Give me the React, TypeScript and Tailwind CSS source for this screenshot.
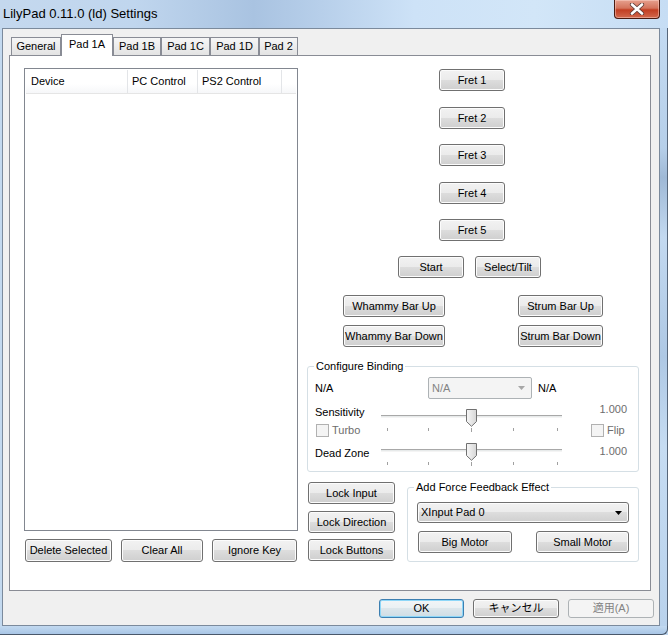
import React from "react";

const BTN =
  "flex items-center justify-center rounded-[3px] border text-[11px] leading-none whitespace-nowrap";
const NORMAL =
  "border-[#707070] bg-[linear-gradient(#f2f2f2_0%,#ebebeb_50%,#dddddd_50%,#cfcfcf_100%)] shadow-[inset_0_0_0_1px_#fcfcfc] text-black";

function Btn({ label, cls }: { label: string; cls: string }) {
  return <div className={`${BTN} ${NORMAL} ${cls}`}>{label}</div>;
}

function Thumb() {
  return (
    <svg width="11" height="18" viewBox="0 0 11 18" className="block">
      <defs>
        <linearGradient id="tg" x1="0" y1="0" x2="1" y2="0">
          <stop offset="0" stopColor="#f7f7f7" />
          <stop offset="1" stopColor="#d6d6d6" />
        </linearGradient>
      </defs>
      <path d="M0.5 0.5 H10.5 V12.5 L5.5 17.3 L0.5 12.5 Z" fill="url(#tg)" stroke="#707070" strokeWidth="1" />
    </svg>
  );
}

function Slider() {
  return (
    <div className="relative w-[181px] h-[24px]">
      <div className="absolute left-0 right-0 top-[6px] h-[3px] border-t border-t-[#a8a8a8] bg-[#e7eaea] border-b border-b-[#f4f4f4]" />
      <div className="absolute left-[85px] top-0">
        <Thumb />
      </div>
      <div className="absolute left-[6px] top-[19px] w-px h-[3px] bg-[#a0a0a0]" />
      <div className="absolute left-[47px] top-[19px] w-px h-[3px] bg-[#a0a0a0]" />
      <div className="absolute left-[90px] top-[19px] w-px h-[4px] bg-[#a0a0a0]" />
      <div className="absolute left-[132px] top-[19px] w-px h-[3px] bg-[#a0a0a0]" />
      <div className="absolute left-[176px] top-[19px] w-px h-[3px] bg-[#a0a0a0]" />
    </div>
  );
}

function Check({ label }: { label: string }) {
  return (
    <div className="flex items-center h-[13px]">
      <div className="w-[13px] h-[13px] border border-[#b1b1b1] bg-[#f4f4f4]" />
      <span className="ml-[3px] text-[11px] leading-[13px] text-[#6d6d6d]">{label}</span>
    </div>
  );
}

function Tab({ label, cls, selected }: { label: string; cls: string; selected?: boolean }) {
  if (selected)
    return (
      <div
        className={`flex items-center justify-center h-[22px] border-l border-t border-r border-[#898c95] bg-white text-[11px] leading-none text-black pb-[2px] ${cls}`}
      >
        {label}
      </div>
    );
  return (
    <div
      className={`flex items-center justify-center h-[19px] border border-[#898c95] bg-[linear-gradient(#f6f6f6,#e3e3e3)] text-[11px] leading-none text-black ${cls}`}
    >
      {label}
    </div>
  );
}

export default function App() {
  return (
    <div className="w-[668px] h-[635px] flex flex-col overflow-hidden font-['Liberation_Sans','Noto_Sans_CJK_JP',sans-serif] bg-[#bed6ee]">
      {/* Title bar */}
      <div className="relative h-[28px] flex items-center pl-[3px] pb-[1px] bg-[linear-gradient(90deg,#c4d8ee_0%,#c0d6ee_20%,#a9c3e1_38%,#b7cfea_48%,#cde2f7_62%,#d2e6f8_80%,#c6ddf4_100%)]">
        <span className="text-[13px] leading-none text-black">LilyPad 0.11.0 (ld) Settings</span>
        <div className="absolute right-[8px] top-0 w-[46px] h-[19px] rounded-b-[4px] border border-t-0 border-[#4a1a10] bg-[linear-gradient(#e6a08e_0%,#d4745c_45%,#c23e22_55%,#d2694e_100%)] shadow-[inset_0_0_0_1px_rgba(255,220,210,0.45)] flex items-center justify-center">
          <svg width="16" height="12" viewBox="0 0 16 12">
            <path d="M3 1.5 L13 10.5 M13 1.5 L3 10.5" stroke="#5a3a36" strokeWidth="4.2" strokeLinecap="round" />
            <path d="M3 1.5 L13 10.5 M13 1.5 L3 10.5" stroke="#ffffff" strokeWidth="2.6" strokeLinecap="round" />
          </svg>
        </div>
      </div>

      {/* Middle */}
      <div className="flex h-[598px]">
        <div className="w-[2px] bg-[#c3d9ef]" />
        <div className="w-[658px] border border-[#7b8a9c] bg-[#f0f0f0] flex flex-col">
          {/* Tabs */}
          <div className="relative z-10 flex items-end h-[22px] mt-[5px] ml-[8px]">
            <Tab label="General" cls="w-[50px]" />
            <Tab label="Pad 1A" cls="w-[52px]" selected />
            <Tab label="Pad 1B" cls="w-[48px]" />
            <Tab label="Pad 1C" cls="w-[49px]" />
            <Tab label="Pad 1D" cls="w-[49px]" />
            <Tab label="Pad 2" cls="w-[39px]" />
          </div>
          {/* Panel */}
          <div className="-mt-[1px] ml-[6px] w-[642px] h-[536px] border border-[#898c95] bg-white flex pl-[14px] pt-[12px] text-[11px] text-black">
            {/* Left column */}
            <div className="w-[274px] flex flex-col">
              <div className="h-[463px] border border-[#828790] bg-white pt-[1px] px-[1px]">
                <div className="flex h-[24px] border-b border-[#e5e5e5] bg-[linear-gradient(#ffffff_0%,#ffffff_60%,#f6f7f9_100%)] leading-none">
                  <div className="w-[102px] border-r border-[#e3e5e8] flex items-center pl-[5px]">Device</div>
                  <div className="w-[70px] border-r border-[#e3e5e8] flex items-center pl-[4px]">PC Control</div>
                  <div className="w-[84px] border-r border-[#e3e5e8] flex items-center pl-[4px]">PS2 Control</div>
                  <div className="flex-1" />
                </div>
              </div>
              <div className="flex gap-[9px] mt-[8px] ml-[1px]">
                <Btn label="Delete Selected" cls="w-[87px] h-[23px]" />
                <Btn label="Clear All" cls="w-[82px] h-[23px]" />
                <Btn label="Ignore Key" cls="w-[85px] h-[23px]" />
              </div>
            </div>

            {/* Right column */}
            <div className="ml-[9px] w-[332px] flex flex-col">
              <Btn label="Fret 1" cls="mt-[1px] ml-[132px] w-[66px] h-[22px]" />
              <Btn label="Fret 2" cls="mt-[16px] ml-[132px] w-[66px] h-[22px]" />
              <Btn label="Fret 3" cls="mt-[15px] ml-[132px] w-[66px] h-[22px]" />
              <Btn label="Fret 4" cls="mt-[16px] ml-[132px] w-[66px] h-[22px]" />
              <Btn label="Fret 5" cls="mt-[15px] ml-[132px] w-[66px] h-[22px]" />
              <div className="flex mt-[15px] ml-[91px] gap-[11px]">
                <Btn label="Start" cls="w-[66px] h-[22px]" />
                <Btn label="Select/Tilt" cls="w-[66px] h-[22px]" />
              </div>
              <div className="flex mt-[17px] ml-[36px]">
                <Btn label="Whammy Bar Up" cls="w-[102px] h-[22px]" />
                <Btn label="Strum Bar Up" cls="ml-[73px] w-[85px] h-[22px]" />
              </div>
              <div className="flex mt-[8px] ml-[36px]">
                <Btn label="Whammy Bar Down" cls="w-[102px] h-[22px]" />
                <Btn label="Strum Bar Down" cls="ml-[73px] w-[85px] h-[22px]" />
              </div>

              {/* Configure Binding */}
              <div className="relative mt-[19px] w-[332px] h-[106px] rounded-[3px] border border-[#d5dfe5] pt-[10px] pl-[7px]">
                <span className="absolute left-[6px] -top-[7px] bg-white px-[2px] leading-[13px]">Configure Binding</span>
                <div className="flex items-center h-[22px]">
                  <span className="w-[113px]">N/A</span>
                  <div className="w-[104px] h-[22px] rounded-[2px] border border-[#adb2b5] bg-[#f4f4f4] flex items-center pl-[3px] text-[#838383]">
                    <span className="flex-1">N/A</span>
                    <svg width="17" height="8" viewBox="0 0 17 8" className="mr-[1px]">
                      <path d="M5 2 L12 2 L8.5 6 Z" fill="#a7a7a7" />
                    </svg>
                  </div>
                  <span className="ml-[6px]">N/A</span>
                </div>
                <div className="flex items-start mt-[4px]">
                  <div className="w-[66px] flex flex-col">
                    <span className="mt-[3px] leading-[13px]">Sensitivity</span>
                    <div className="mt-[5px] ml-[1px]">
                      <Check label="Turbo" />
                    </div>
                  </div>
                  <div className="mt-[6px]">
                    <Slider />
                  </div>
                  <div className="flex-1 flex flex-col pr-[11px]">
                    <span className="text-right leading-[13px] text-[#6d6d6d]">1.000</span>
                    <div className="mt-[8px] ml-[29px]">
                      <Check label="Flip" />
                    </div>
                  </div>
                </div>
                <div className="flex items-start mt-[6px]">
                  <span className="w-[66px] mt-[4px] leading-[13px]">Dead Zone</span>
                  <Slider />
                  <span className="flex-1 pr-[11px] mt-[2px] text-right leading-[13px] text-[#6d6d6d]">1.000</span>
                </div>
              </div>

              {/* Lock + Force feedback */}
              <div className="flex items-start mt-[10px]">
                <div className="ml-[1px] flex flex-col">
                  <Btn label="Lock Input" cls="w-[87px] h-[22px]" />
                  <Btn label="Lock Direction" cls="mt-[7px] w-[87px] h-[22px]" />
                  <Btn label="Lock Buttons" cls="mt-[6px] w-[87px] h-[22px]" />
                </div>
                <div className="relative ml-[12px] mt-[5px] w-[232px] h-[75px] rounded-[3px] border border-[#d5dfe5] pt-[14px] pl-[9px]">
                  <span className="absolute left-[6px] -top-[7px] bg-white px-[2px] leading-[13px]">Add Force Feedback Effect</span>
                  <div className="w-[212px] h-[21px] rounded-[3px] border border-[#707070] bg-[linear-gradient(#f2f2f2_0%,#ebebeb_50%,#dddddd_50%,#cfcfcf_100%)] shadow-[inset_0_0_0_1px_#fcfcfc] flex items-center pl-[3px]">
                    <span className="flex-1 leading-none">XInput Pad 0</span>
                    <svg width="16" height="8" viewBox="0 0 16 8" className="mr-[1px]">
                      <path d="M4 2 L11 2 L7.5 6 Z" fill="#000" />
                    </svg>
                  </div>
                  <div className="flex mt-[8px] ml-[1px]">
                    <Btn label="Big Motor" cls="w-[94px] h-[22px]" />
                    <Btn label="Small Motor" cls="ml-[24px] w-[93px] h-[22px]" />
                  </div>
                </div>
              </div>
            </div>
          </div>

          {/* Dialog buttons */}
          <div className="flex justify-end gap-[9px] mt-[8px] pr-[5px]">
            <div className={`${BTN} w-[85px] h-[19px] border-[#3c7fb1] bg-[linear-gradient(#f2f5f7_0%,#eaf0f3_50%,#dce6eb_50%,#cfdde5_100%)] shadow-[inset_0_0_0_1px_#8ed7f8] text-black`}>
              OK
            </div>
            <Btn label="キャンセル" cls="w-[86px] h-[19px]" />
            <div className={`${BTN} w-[86px] h-[19px] border-[#adb2b5] bg-[#f4f4f4] text-[#838383]`}>適用(A)</div>
          </div>
        </div>
        <div className="w-[8px] bg-[linear-gradient(#c4dbf2_0%,#b6cfe9_20%,#9fb9d6_25%,#c3d9f0_35%,#aec8e4_55%,#c6dcf2_70%,#b9d2ec_100%)] border-r border-[#56667a]" />
      </div>
      <div className="h-[9px] bg-[linear-gradient(#c2d9f0,#a9c6e6)] border-b border-r border-[#4a586a] rounded-br-[6px]" />
    </div>
  );
}
